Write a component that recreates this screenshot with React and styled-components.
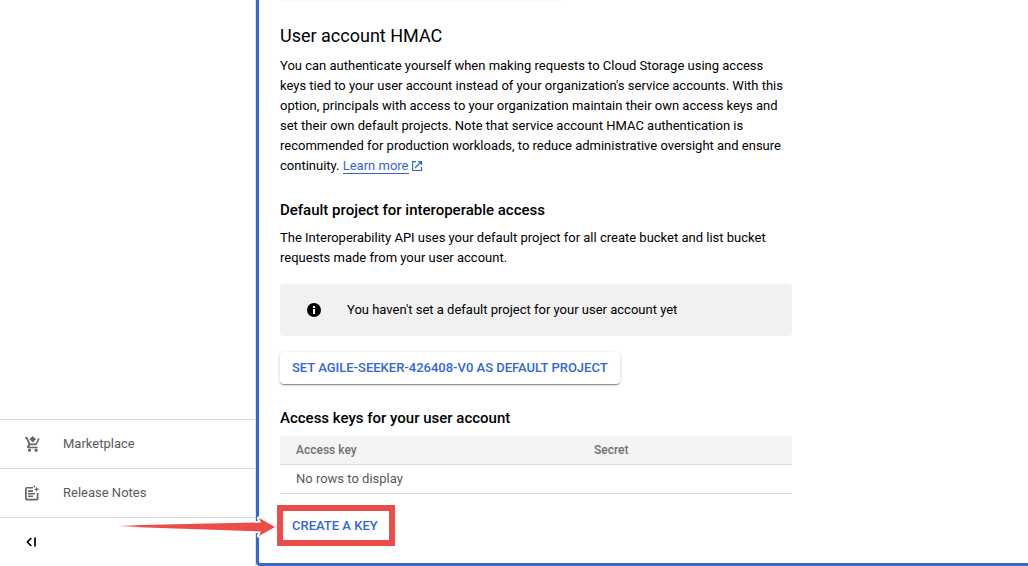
import React from 'react';
import styled, { createGlobalStyle } from 'styled-components';

const GlobalStyle = createGlobalStyle`
  *, *::before, *::after { box-sizing: border-box; }
  body {
    margin: 0;
    background: #fff;
    color: #000;
    font: 400 13px/20px Roboto, "Liberation Sans", sans-serif;
  }
  h2, h3, p { margin: 0; }
`;

const Shell = styled.div`
  display: flex;
  min-height: 100vh;
`;

const Sidebar = styled.aside`
  flex: 0 0 256px;
  display: flex;
  flex-direction: column;
  justify-content: flex-end;
  border-right: 1px solid #e0e0e0;
`;

const NavLink = styled.a`
  display: flex;
  align-items: center;
  gap: 23px;
  height: 49px;
  padding-left: 24px;
  border-top: 1px solid #dadada;
  color: #5a5a5a;
  text-decoration: none;

  svg { fill: #666; }
`;

const CollapseButton = styled.button`
  display: flex;
  align-items: center;
  height: 49px;
  padding: 0 0 0 24px;
  border: 0;
  border-top: 1px solid #dadada;
  background: none;
`;

const Panel = styled.main`
  flex: 1;
  min-width: 0;
  border: solid #3367d6;
  border-width: 0 0 3px 3px;
  border-bottom-left-radius: 4px;
  padding: 0 21px 21px;
`;

const Content = styled.div`
  max-width: 512px;
`;

const SectionEdge = styled.div`
  width: 55%;
  height: 2px;
  margin-bottom: 22px;
  background: #fafafa;
`;

const Title = styled.h2`
  margin-bottom: 8px;
  font-size: 18px;
  font-weight: 400;
  line-height: 24px;
`;

const Subtitle = styled.h3`
  margin: 24px 0 8px;
  font-size: 15px;
  font-weight: 500;
  line-height: 20px;
`;

const LearnMore = styled.a`
  border-bottom: 1px solid #3367d6;
  color: #3367d6;
  text-decoration: none;

  + svg { margin-left: 2px; vertical-align: -2px; }
`;

const Notice = styled.div`
  display: flex;
  align-items: center;
  gap: 24px;
  margin: 16px 0;
  padding: 16px 25px;
  border-radius: 4px;
  background: #f1f1f1;
`;

const Button = styled.button`
  display: block;
  height: 32px;
  padding: 0 12px;
  border: 0;
  border-radius: 4px;
  background: #fff;
  color: #3367d6;
  font: 500 13px/32px Roboto, "Liberation Sans", sans-serif;
  text-transform: uppercase;
  white-space: nowrap;
  box-shadow: ${({ $raised }) =>
    $raised
      ? '0 1px 1px rgba(0,0,0,.26), 0 2px 1px -1px rgba(0,0,0,.2), 0 1px 4px rgba(0,0,0,.14)'
      : 'none'};
`;

const KeyTable = styled.table`
  width: 100%;
  border-collapse: separate;
  border-spacing: 0;
  table-layout: fixed;
  color: #5a5a5a;

  th, td {
    height: 29px;
    padding: 0 16px;
    border-bottom: 1px solid #dedede;
    text-align: left;
  }
  th {
    background: #f4f4f4;
    color: #707070;
    font-size: 12px;
    font-weight: 500;
  }
  th:first-child { width: 298px; }
`;

const CreateKey = styled.div`
  position: relative;
  width: fit-content;
  margin-top: 16px;
`;

const Highlight = styled.div`
  position: absolute;
  inset: -5px -5px -4px -3px;
  border: 6px solid #eb4d4b;
  pointer-events: none;
`;

const Arrow = styled.svg`
  position: absolute;
  right: calc(100% + 4px);
  top: 4px;
  pointer-events: none;
`;

const MarketplaceIcon = () => (
  <svg width="16" height="16" viewBox="0 0 16 16" aria-hidden="true">
    <path d="M8.7 0L12 3.300 8.700 6.600 5.400 3.300z" />
    <path d="M1 1h2.300l3 6.500h5.400L14.200 2l1.400.7-2.700 5.800q-.3.7-1.100.7H6l-.9 1.600h8.400v1.500H4.100q-1.700-.3-1-2l1.300-2.300L2.200 2.600H1z" />
    <rect x="4" y="12.800" width="3" height="3" rx="1" />
    <rect x="10.600" y="12.800" width="3" height="3" rx="1" />
  </svg>
);

const NotesIcon = () => (
  <svg width="16" height="16" viewBox="0 0 16 16" aria-hidden="true">
    <path d="M2.800 2H9v1.600H2.700v10.100h10V8h1.700v5.700q0 1.700-1.700 1.700H2.700Q1 15.400 1 13.700V3.700Q1 2 2.800 2z" />
    <path d="M4 5.300h5V7H4zM4 7.900h7v1.600H4zM4 10.500h5V12H4z" />
    <path d="M12.700 1.500l.8 1.900 1.900.8-1.900.8-.8 1.900-.8-1.900-1.900-.8 1.900-.8zM10.300.100l.5 1 .9.4-.9.500-.5.900-.4-.9-1-.5 1-.4z" />
  </svg>
);

const CollapseIcon = () => (
  <svg width="16" height="16" viewBox="0 0 16 16" fill="none" stroke="#000" strokeWidth="1.700" aria-hidden="true">
    <path d="M7.300 4L3.400 8l3.900 4M11 3.500v9" />
  </svg>
);

const ExternalIcon = () => (
  <svg width="12" height="12" viewBox="0 0 12 12" fill="none" stroke="#3367d6" strokeWidth="1.200" aria-hidden="true">
    <path d="M5 1.600H1.600v8.900h8.900V7M7 1.600h3.500V5M10.300 1.800L4 8" />
  </svg>
);

const InfoIcon = () => (
  <svg width="18" height="18" viewBox="0 0 18 18" aria-hidden="true">
    <circle cx="9" cy="9" r="7" />
    <path fill="#fff" d="M8 5h2v2H8zM8 8h2v5H8z" />
  </svg>
);

export default function App() {
  return (
    <>
      <GlobalStyle />
      <Shell>
        <Sidebar>
          <NavLink href="#marketplace"><MarketplaceIcon />Marketplace</NavLink>
          <NavLink href="#release-notes"><NotesIcon />Release Notes</NavLink>
          <CollapseButton type="button" aria-label="Collapse navigation">
            <CollapseIcon />
          </CollapseButton>
        </Sidebar>
        <Panel>
          <Content>
            <SectionEdge />
            <Title>User account HMAC</Title>
            <p>
              You can authenticate yourself when making requests to Cloud Storage using access
              keys tied to your user account instead of your organization's service accounts. With
              this option, principals with access to your organization maintain their own access
              keys and set their own default projects. Note that service account HMAC
              authentication is recommended for production workloads, to reduce administrative
              oversight and ensure continuity.{' '}
              <LearnMore href="#learn-more">Learn more</LearnMore><ExternalIcon />
            </p>
            <Subtitle>Default project for interoperable access</Subtitle>
            <p>
              The Interoperability API uses your default project for all create bucket and list
              bucket requests made from your user account.
            </p>
            <Notice>
              <InfoIcon />
              <span>You haven't set a default project for your user account yet</span>
            </Notice>
            <Button type="button" $raised>Set agile-seeker-426408-v0 as default project</Button>
            <Subtitle id="keys-title">Access keys for your user account</Subtitle>
            <KeyTable aria-labelledby="keys-title">
              <thead>
                <tr><th scope="col">Access key</th><th scope="col">Secret</th></tr>
              </thead>
              <tbody>
                <tr><td colSpan={2}>No rows to display</td></tr>
              </tbody>
            </KeyTable>
            <CreateKey>
              <Button type="button">Create a key</Button>
              <Highlight />
              <Arrow width="160" height="24" viewBox="0 0 160 24" aria-hidden="true">
                <defs>
                  <linearGradient id="arrow-fade">
                    <stop offset="0" stopColor="#eb4d4b" stopOpacity="0" />
                    <stop offset=".15" stopColor="#eb4d4b" />
                  </linearGradient>
                </defs>
                <path
                  d="M139 8.500L144 8.500 142.500 4 159 13 142.500 22 144 17.500 139 17.500z"
                  fill="#fff" stroke="#fff" strokeWidth="3" strokeLinejoin="round"
                />
                <path
                  d="M1 11.500L145 8.500 143 4 159 13 143 22 145 17.500 1 12.500z"
                  fill="url(#arrow-fade)"
                />
              </Arrow>
            </CreateKey>
          </Content>
        </Panel>
      </Shell>
    </>
  );
}
